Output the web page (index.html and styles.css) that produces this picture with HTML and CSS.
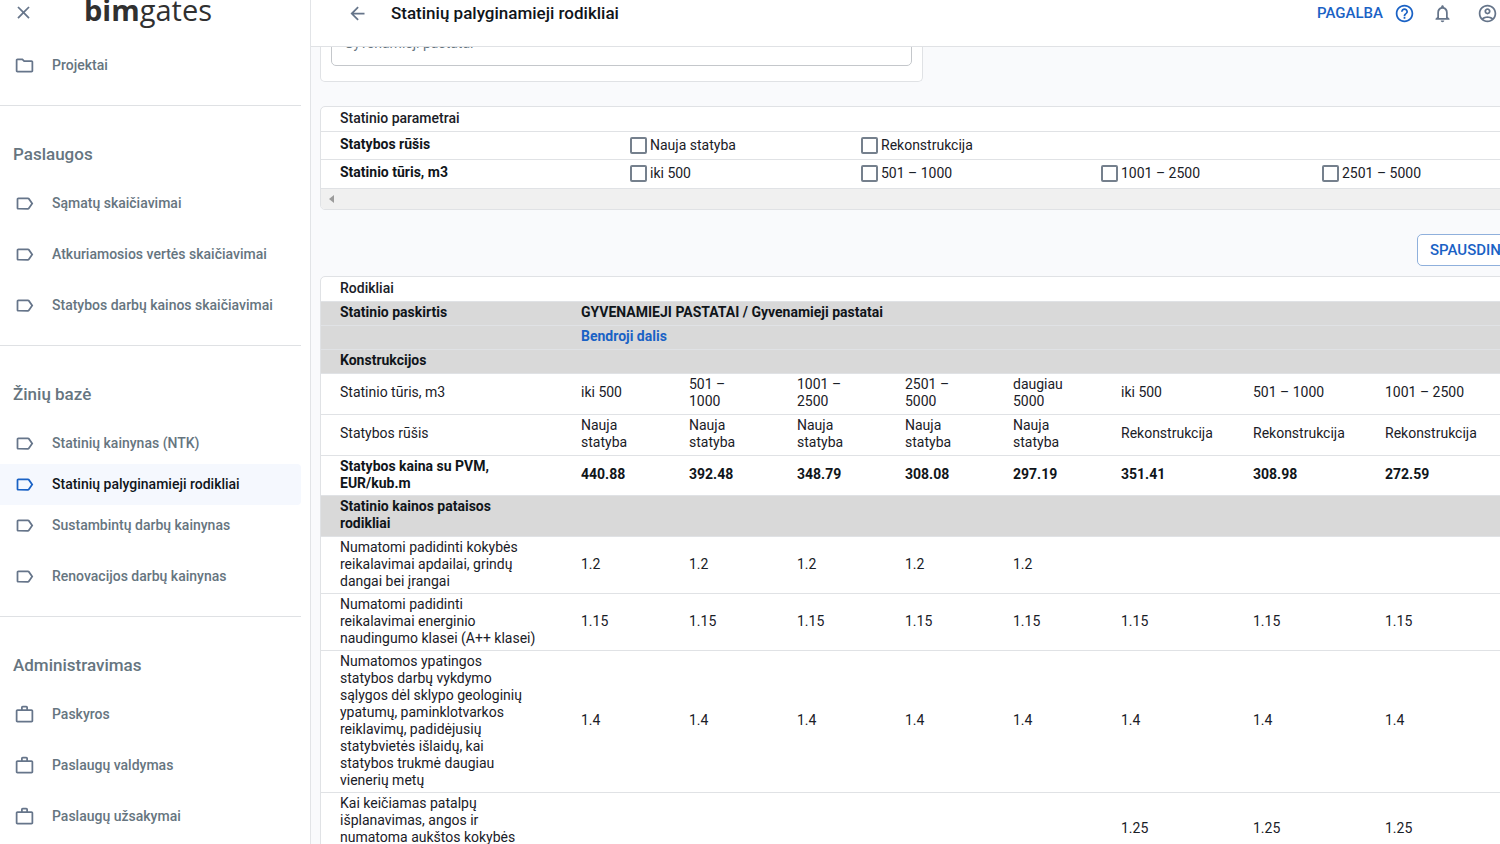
FILE: index.html
```html
<!DOCTYPE html>
<html lang="lt">
<head>
<meta charset="utf-8">
<title>Statinių palyginamieji rodikliai</title>
<link rel="stylesheet" href="styles.css">
</head>
<body>
<svg class="sprite" aria-hidden="true">
  <symbol id="label" viewBox="0 0 24 24"><path d="M17.63 5.84C17.27 5.33 16.67 5 16 5L5 5.01C3.9 5.01 3 5.9 3 7v10c0 1.1.9 1.99 2 1.99L16 19c.67 0 1.27-.33 1.63-.84L22 12l-4.37-6.16zM16 17H5V7h11l3.55 5L16 17z"/></symbol>
  <symbol id="folder" viewBox="0 0 24 24"><path d="m9.17 6 2 2H20v10H4V6h5.17M10 4H4c-1.1 0-1.99.9-1.99 2L2 18c0 1.1.9 2 2 2h16c1.100 0 2-.9 2-2V8c0-1.100-.9-2-2-2h-8l-2-2z"/></symbol>
  <symbol id="case" viewBox="0 0 24 24"><path d="M14 6V4h-4v2h4zM4 8v11h16V8H4zm16-2c1.110 0 2 .89 2 2v11c0 1.110-.89 2-2 2H4c-1.110 0-2-.89-2-2l.01-11c0-1.110.88-2 1.990-2h4V4c0-1.110.89-2 2-2h4c1.110 0 2 .89 2 2v2h4z"/></symbol>
</svg>
<div class="app">
  <aside class="sidebar">
    <div class="brand">
      <button class="icon-button" type="button" aria-label="Uždaryti"><svg class="icon" viewBox="0 0 24 24"><path d="M19 6.410 17.590 5 12 10.590 6.410 5 5 6.410 10.590 12 5 17.590 6.410 19 12 13.410 17.590 19 19 17.590 13.410 12z"/></svg></button>
      <a class="logo" href="#"><b>bim</b>gates</a>
    </div>
    <nav class="nav">
      <section class="nav-group">
        <a class="nav-item" href="#"><svg class="icon"><use href="#folder"/></svg>Projektai</a>
      </section>
      <section class="nav-group">
        <h2>Paslaugos</h2>
        <a class="nav-item" href="#"><svg class="icon"><use href="#label"/></svg>Sąmatų skaičiavimai</a>
        <a class="nav-item" href="#"><svg class="icon"><use href="#label"/></svg>Atkuriamosios vertės skaičiavimai</a>
        <a class="nav-item" href="#"><svg class="icon"><use href="#label"/></svg>Statybos darbų kainos skaičiavimai</a>
      </section>
      <section class="nav-group">
        <h2>Žinių bazė</h2>
        <div class="nav-stack">
          <a class="nav-item" href="#"><svg class="icon"><use href="#label"/></svg>Statinių kainynas (NTK)</a>
          <a class="nav-item active" href="#" aria-current="page"><svg class="icon"><use href="#label"/></svg>Statinių palyginamieji rodikliai</a>
          <a class="nav-item" href="#"><svg class="icon"><use href="#label"/></svg>Sustambintų darbų kainynas</a>
        </div>
        <a class="nav-item" href="#"><svg class="icon"><use href="#label"/></svg>Renovacijos darbų kainynas</a>
      </section>
      <section class="nav-group">
        <h2>Administravimas</h2>
        <a class="nav-item" href="#"><svg class="icon"><use href="#case"/></svg>Paskyros</a>
        <a class="nav-item" href="#"><svg class="icon"><use href="#case"/></svg>Paslaugų valdymas</a>
        <a class="nav-item" href="#"><svg class="icon"><use href="#case"/></svg>Paslaugų užsakymai</a>
      </section>
    </nav>
  </aside>
  <main class="main">
    <header class="topbar">
      <button class="icon-button" type="button" aria-label="Atgal"><svg class="icon" viewBox="0 0 24 24"><path d="M20 11H7.830l5.590-5.590L12 4l-8 8 8 8 1.410-1.410L7.830 13H20v-2z"/></svg></button>
      <h1>Statinių palyginamieji rodikliai</h1>
      <a class="help" href="#">PAGALBA<svg class="icon" viewBox="0 0 24 24"><path d="M11 18h2v-2h-2v2zm1-16C6.480 2 2 6.480 2 12s4.480 10 10 10 10-4.480 10-10S17.520 2 12 2zm0 18c-4.410 0-8-3.590-8-8s3.590-8 8-8 8 3.590 8 8-3.590 8-8 8zm0-14c-2.210 0-4 1.790-4 4h2c0-1.100.9-2 2-2s2 .9 2 2c0 2-3 1.750-3 5h2c0-2.250 3-2.500 3-5 0-2.210-1.790-4-4-4z"/></svg></a>
      <button class="icon-button" type="button" aria-label="Pranešimai"><svg class="icon" viewBox="0 0 24 24"><path d="M12 22c1.100 0 2-.9 2-2h-4c0 1.100.9 2 2 2zm6-6v-5c0-3.070-1.630-5.640-4.500-6.320V4c0-.83-.67-1.500-1.500-1.500s-1.500.67-1.500 1.500v.68C7.640 5.360 6 7.920 6 11v5l-2 2v1h16v-1l-2-2zm-2 1H8v-6c0-2.480 1.510-4.500 4-4.500s4 2.020 4 4.500v6z"/></svg></button>
      <button class="icon-button account" type="button" aria-label="Paskyra"><svg class="icon" viewBox="0 0 24 24"><path d="M12 2C6.480 2 2 6.480 2 12s4.480 10 10 10 10-4.480 10-10S17.520 2 12 2zM7.350 18.500C8.660 17.560 10.260 17 12 17s3.340.56 4.650 1.500C15.340 19.440 13.740 20 12 20s-3.340-.56-4.650-1.500zm10.790-1.380C16.450 15.800 14.320 15 12 15s-4.450.8-6.140 2.120C4.700 15.730 4 13.950 4 12c0-4.420 3.580-8 8-8s8 3.580 8 8c0 1.950-.7 3.730-1.860 5.120zM12 6c-1.930 0-3.500 1.570-3.500 3.500S10.070 13 12 13s3.500-1.570 3.500-3.500S13.930 6 12 6zm0 5c-.83 0-1.500-.67-1.500-1.500S11.170 8 12 8s1.500.67 1.500 1.500S12.830 11 12 11z"/></svg></button>
    </header>
    <div class="content">
      <form class="card purpose">
        <select aria-label="Statinio paskirtis"><option>Gyvenamieji pastatai</option></select>
      </form>
      <section class="card">
        <h3>Statinio parametrai</h3>
        <table class="params">
          <colgroup><col class="p-label"><col class="p-a"><col class="p-b"><col class="p-c"><col></colgroup>
          <tr>
            <th scope="row">Statybos rūšis</th>
            <td><label><input type="checkbox">Nauja statyba</label></td>
            <td><label><input type="checkbox">Rekonstrukcija</label></td>
            <td></td><td></td>
          </tr>
          <tr>
            <th scope="row">Statinio tūris, m3</th>
            <td><label><input type="checkbox">iki 500</label></td>
            <td><label><input type="checkbox">501 – 1000</label></td>
            <td><label><input type="checkbox">1001 – 2500</label></td>
            <td><label><input type="checkbox">2501 – 5000</label></td>
          </tr>
        </table>
        <div class="scroll-track"><span class="scroll-arrow"></span></div>
      </section>
      <div class="actions"><button class="print" type="button">SPAUSDINTI</button></div>
      <section class="card">
        <h3>Rodikliai</h3>
        <table class="rates">
          <colgroup><col class="r-label"><col class="r-new"><col class="r-new"><col class="r-new"><col class="r-new"><col class="r-new"><col class="r-re"><col class="r-re"><col></colgroup>
          <tr class="band"><th scope="row">Statinio paskirtis</th><th colspan="8">GYVENAMIEJI PASTATAI / Gyvenamieji pastatai</th></tr>
          <tr class="band"><th></th><th colspan="8"><a href="#">Bendroji dalis</a></th></tr>
          <tr class="band"><th scope="row">Konstrukcijos</th><th colspan="8"></th></tr>
          <tr><td>Statinio tūris, m3</td><td>iki 500</td><td>501 –<br>1000</td><td>1001 –<br>2500</td><td>2501 –<br>5000</td><td>daugiau 5000</td><td>iki 500</td><td>501 – 1000</td><td>1001 – 2500</td></tr>
          <tr><td>Statybos rūšis</td><td>Nauja statyba</td><td>Nauja statyba</td><td>Nauja statyba</td><td>Nauja statyba</td><td>Nauja statyba</td><td>Rekonstrukcija</td><td>Rekonstrukcija</td><td>Rekonstrukcija</td></tr>
          <tr class="price"><th scope="row">Statybos kaina su PVM, EUR/kub.m</th><td>440.88</td><td>392.48</td><td>348.79</td><td>308.08</td><td>297.19</td><td>351.41</td><td>308.98</td><td>272.59</td></tr>
          <tr class="band"><th scope="row">Statinio kainos pataisos rodikliai</th><th colspan="8"></th></tr>
          <tr class="factor"><td>Numatomi padidinti kokybės reikalavimai apdailai, grindų dangai bei įrangai</td><td>1.2</td><td>1.2</td><td>1.2</td><td>1.2</td><td>1.2</td><td></td><td></td><td></td></tr>
          <tr class="factor"><td>Numatomi padidinti reikalavimai energinio naudingumo klasei (A++ klasei)</td><td>1.15</td><td>1.15</td><td>1.15</td><td>1.15</td><td>1.15</td><td>1.15</td><td>1.15</td><td>1.15</td></tr>
          <tr class="factor"><td>Numatomos ypatingos statybos darbų vykdymo sąlygos dėl sklypo geologinių ypatumų, paminklotvarkos reiklavimų, padidėjusių statybvietės išlaidų, kai statybos trukmė daugiau vienerių metų</td><td>1.4</td><td>1.4</td><td>1.4</td><td>1.4</td><td>1.4</td><td>1.4</td><td>1.4</td><td>1.4</td></tr>
          <tr class="factor"><td>Kai keičiamas patalpų išplanavimas, angos ir numatoma aukštos kokybės apdaila</td><td></td><td></td><td></td><td></td><td></td><td>1.25</td><td>1.25</td><td>1.25</td></tr>
        </table>
      </section>
    </div>
  </main>
</div>
</body>
</html>
```
FILE: styles.css
```css
* { box-sizing: border-box; }
body {
  margin: 0;
  font: 14px/17px Roboto, "Liberation Sans", sans-serif;
  color: #1a2027;
  background: #f9fafc;
}
a { color: inherit; text-decoration: none; }
h1, h2, h3 { margin: 0; font-weight: 500; }
.sprite { display: none; }
.icon { width: 21px; height: 21px; flex: none; fill: currentColor; display: block; }
.icon-button { border: 0; padding: 0; background: none; color: #66758a; }

.app { display: flex; height: 100vh; overflow: hidden; }

.sidebar {
  flex: none;
  width: 311px;
  background: #fff;
  border-right: 1px solid #e2e4e7;
  color: #66757f;
}
.brand { display: flex; align-items: flex-start; height: 45px; padding: 2px 13px 0; gap: 50px; }
.logo { font: 29px/16px "Open Sans", sans-serif; color: #303030; }
.nav-group { display: flex; flex-direction: column; gap: 10px; margin-right: 9px; padding-bottom: 19px; }
.nav-group + .nav-group { border-top: 1px solid #dfe1e4; padding-top: 28px; }
.nav-group h2 { padding: 0 13px; font-size: 17px; line-height: 40px; margin-bottom: -1px; }
.nav-item { display: flex; align-items: center; gap: 17px; height: 41px; padding: 0 14px; font-weight: 500; border-radius: 0 4px 4px 0; white-space: nowrap; }
.nav-item .icon { color: #66758a; }
.nav-item.active { background: #f5f8fe; color: #10151a; }
.nav-item.active .icon { color: #1a62c5; }

.main { flex: 1; min-width: 0; overflow: hidden; }
.topbar {
  position: relative;
  z-index: 1;
  display: flex;
  align-items: flex-start;
  height: 47px;
  padding: 3px 2px 0 36px;
  background: #fff;
  border-bottom: 1px solid #e0e2e5;
}
.topbar h1 { flex: 1; padding-left: 23px; font-size: 17px; line-height: 21px; color: #10151a; }
.help { display: flex; gap: 11px; margin-right: 17px; font-size: 15px; line-height: 21px; font-weight: 500; color: #1a62c5; }
.account { margin-left: 24px; }

.content { margin: -31px 0 0 9px; min-width: 1217px; }
.card { background: #fff; border: 1px solid #e0e2e5; border-radius: 5px; overflow: hidden; }
.purpose { width: 603px; padding: 4px 10px 15px; margin-bottom: 24px; border-top: 0; }
.purpose select {
  display: block;
  width: 100%;
  height: 46px;
  padding: 0 12px;
  appearance: none;
  font: inherit;
  color: #66757f;
  background: #fff;
  border: 1px solid #c4c7cb;
  border-radius: 5px;
}
h3 { padding: 2px 19px 4px; font-size: 14px; line-height: 18px; }
table { width: 100%; border-collapse: collapse; table-layout: fixed; }
th, td { padding: 2px 19px 4px; text-align: left; font-weight: 400; }
th { font-weight: 700; color: #10151a; }

.params tr { height: 28px; border-top: 1px solid #e0e2e5; }
.params td { padding: 3px 19px; }
.p-label { width: 290px; }
.p-a { width: 231px; }
.p-b { width: 240px; }
.p-c { width: 221px; }
.params label { display: flex; align-items: center; gap: 3px; }
.params input {
  width: 17px;
  height: 17px;
  margin: 0;
  appearance: none;
  border: 2px solid #75808d;
  border-radius: 2px;
}
.scroll-track { display: flex; align-items: center; height: 21px; padding-left: 8px; background: #f0f0f0; border-top: 1px solid #e0e2e5; }
.scroll-arrow { border: 4px solid transparent; border-right: 5px solid #9b9b9b; border-left: 0; }

.actions { display: flex; justify-content: flex-end; padding: 24px 0 10px; }
.print {
  height: 32px;
  width: 120px;
  padding: 2px 12px 0;
  text-align: left;
  font: 500 15px/17px Roboto, "Liberation Sans", sans-serif;
  color: #1a62c5;
  background: #fff;
  border: 1px solid #8fb0dc;
  border-radius: 5px;
}

.rates tr { border-top: 1px solid #e0e2e5; }
.rates td, .rates th { height: 24px; }
.rates .band { background: #d9d9d9; }
.rates a { color: #1a62c5; }
.rates .price td { font-weight: 700; color: #10151a; }
.rates .price th, .rates .price td, .rates .factor td { padding-bottom: 3px; }
.r-label { width: 241px; }
.r-new { width: 108px; }
.r-re { width: 132px; }
.rates td:first-child { padding-right: 24px; }
.rates td + td { padding-right: 16px; }
```
